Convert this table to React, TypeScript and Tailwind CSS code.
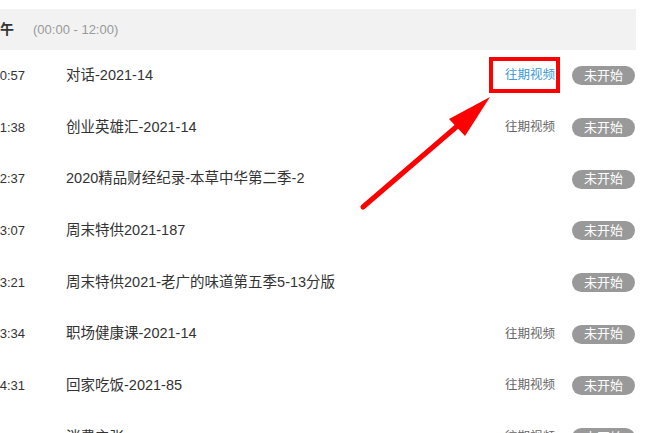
const rows = [
  { time: "00:57", title: "对话-2021-14", replay: true },
  { time: "01:38", title: "创业英雄汇-2021-14", replay: true },
  { time: "02:37", title: "2020精品财经纪录-本草中华第二季-2", replay: false },
  { time: "03:07", title: "周末特供2021-187", replay: false },
  { time: "03:21", title: "周末特供2021-老广的味道第五季5-13分版", replay: false },
  { time: "03:34", title: "职场健康课-2021-14", replay: true },
  { time: "04:31", title: "回家吃饭-2021-85", replay: true },
  { time: "05:06", title: "消费主张", replay: true },
];

export default function App() {
  return (
    <div
      className="relative w-[650px] h-[433px] overflow-hidden bg-white"
      style={{ fontFamily: '"Liberation Sans", "Noto Sans CJK SC", sans-serif' }}
    >
      <div className="ml-[-14px] w-[650px] pt-[9px]">
        {/* section header */}
        <div className="flex items-center h-[41px] bg-[#f2f2f2]">
          <span className="text-[14px] font-bold text-[#333]">上午</span>
          <span className="ml-[19px] text-[13px] text-[#999]">(00:00 - 12:00)</span>
        </div>

        {rows.map((row, i) => (
          <div key={i} className="flex items-center h-[51.67px] pr-[1px]">
            <span className="w-[80px] pl-[6.5px] text-[13px] text-[#333]">{row.time}</span>
            <span className="flex-1 text-[14.5px] text-[#333]">{row.title}</span>
            {row.replay && (
              <span
                className={`text-[12.5px] ${i === 0 ? "text-[#3d9ad6]" : "text-[#666]"}`}
              >
                往期视频
              </span>
            )}
            <span className="ml-[17px] flex items-center justify-center w-[63px] h-[19px] rounded-full bg-[#999] text-white text-[13px]">
              未开始
            </span>
          </div>
        ))}
      </div>

      {/* annotation */}
      <svg className="absolute left-0 top-0 pointer-events-none" width="650" height="433">
        <rect x="491" y="59" width="67" height="32" fill="none" stroke="#ff0000" strokeWidth="4" />
        <line x1="363" y1="207" x2="462" y2="122" stroke="#ff0000" strokeWidth="5" strokeLinecap="round" />
        <polygon points="490,97 449,119 465,136" fill="#ff0000" />
      </svg>
    </div>
  );
}
